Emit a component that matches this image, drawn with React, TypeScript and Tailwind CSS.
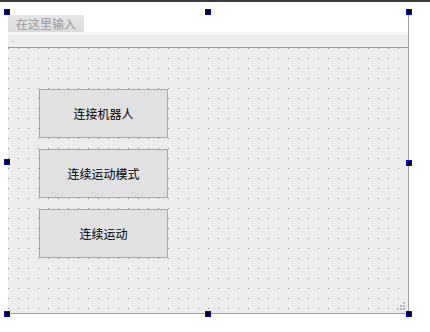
import React from 'react';

const cjk = { fontFamily: '"Noto Sans CJK SC", "Noto Sans", sans-serif' };

function Handle({ className }: { className: string }) {
  return (
    <div className={`absolute w-[6px] h-[6px] border border-[#0000ff] bg-black ${className}`} />
  );
}

function FormButton({ label }: { label: string }) {
  return (
    <div className="w-[129px] h-[49px] border border-[#a8a8a8] bg-[#e1e1e1] flex items-center justify-center text-[12px] text-black leading-none">
      {label}
    </div>
  );
}

export default function App() {
  return (
    <div className="relative w-[430px] h-[332px] bg-white overflow-hidden" style={cjk}>
      {/* window top edge */}
      <div className="h-[2px] bg-[#3c3c3c]" />

      {/* form */}
      <div className="ml-[8px] mt-[13px] w-[401px] h-[299px] border-r border-b border-[#a0a0a0] flex flex-col">
        {/* menu bar */}
        <div className="h-[17px] bg-white flex">
          <div className="w-[76px] h-full bg-gradient-to-b from-[#e6e6e6] to-[#dcdcdc] text-[12px] leading-none text-[#9a9a9a] flex items-center pl-[8px]">
            在这里输入
          </div>
        </div>
        {/* toolbar strip */}
        <div className="h-[15px] border-t-[3px] border-[#f6f6f6] bg-[#ededed] flex items-center pl-[4px]">
          <div className="w-[1px] h-[1px] bg-[#9a9a9a]" />
        </div>
        <div className="h-[1px] bg-[#a0a0a0]" />

        {/* central widget with grid */}
        <div className="flex-1 bg-[#ececec] bg-[image:conic-gradient(from_270deg_at_1px_1px,#8c8c8c_90deg,transparent_0)] bg-[size:10px_10px] flex flex-col gap-[11px] pl-[31px] pt-[41px] relative">
          <FormButton label="连接机器人" />
          <FormButton label="连续运动模式" />
          <FormButton label="连续运动" />
          {/* size grip */}
          <svg className="absolute right-[2px] bottom-[2px]" width="9" height="9" viewBox="0 0 9 9">
            <rect x="6" y="0" width="2" height="2" fill="#b8b8b8" />
            <rect x="3" y="3" width="2" height="2" fill="#b8b8b8" />
            <rect x="6" y="3" width="2" height="2" fill="#b8b8b8" />
            <rect x="0" y="6" width="2" height="2" fill="#b8b8b8" />
            <rect x="3" y="6" width="2" height="2" fill="#b8b8b8" />
            <rect x="6" y="6" width="2" height="2" fill="#b8b8b8" />
          </svg>
        </div>
      </div>

      {/* selection handles */}
      <Handle className="left-[4px] top-[9px]" />
      <Handle className="left-[205px] top-[9px]" />
      <Handle className="left-[406px] top-[9px]" />
      <Handle className="left-[4px] top-[159px]" />
      <Handle className="left-[406px] top-[160px]" />
      <Handle className="left-[4px] top-[311px]" />
      <Handle className="left-[205px] top-[311px]" />
      <Handle className="left-[406px] top-[311px]" />
    </div>
  );
}
